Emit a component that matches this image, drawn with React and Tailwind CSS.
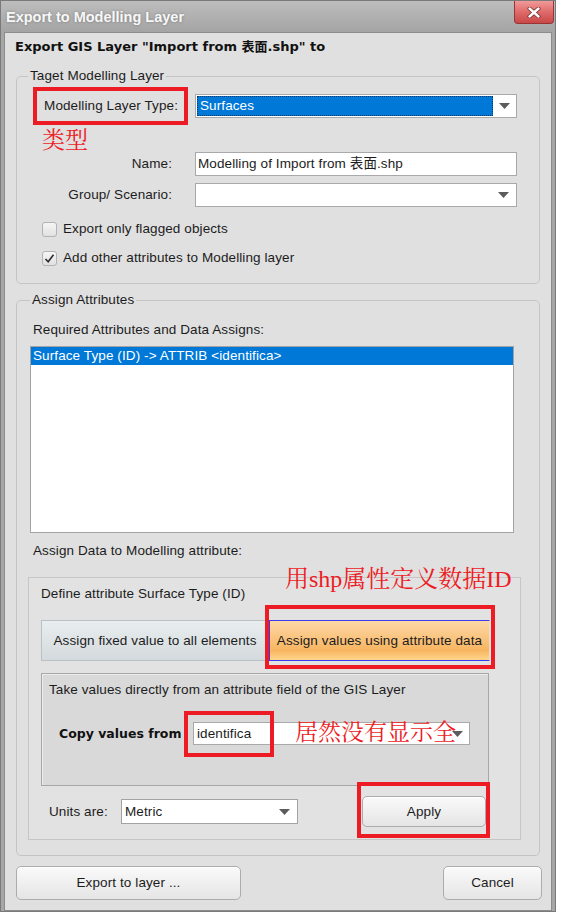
import React from 'react';

function Arrow() {
  return (
    <svg width="11" height="6" viewBox="0 0 11 6" className="shrink-0">
      <path d="M0 0H11L5.5 6Z" fill="#5c5c5c" />
    </svg>
  );
}

function RedBox({ className }) {
  return <span className={`pointer-events-none absolute border-[4px] border-[#ed1c24] ${className}`} />;
}

function RedNote({ className, children }) {
  return (
    <span
      className={`pointer-events-none absolute whitespace-nowrap tracking-normal text-[#ed1c24] font-['Liberation_Serif','Noto_Serif_CJK_SC','Noto_Sans_CJK_SC',serif] ${className}`}
    >
      {children}
    </span>
  );
}

function Check({ checked, label }) {
  return (
    <div className="flex items-center h-[16px] ml-[25px] gap-[6px]">
      <span className="w-[15px] h-[15px] rounded-[3px] border border-[#b3b3b3] bg-gradient-to-b from-[#f6f6f6] to-[#e1e1e1] flex items-center justify-center">
        {checked && (
          <svg width="11" height="11" viewBox="0 0 11 11">
            <path d="M1.5 6L4.2 8.8L9.5 1.8" fill="none" stroke="#2a2a2a" strokeWidth="1.6" />
          </svg>
        )}
      </span>
      <span>{label}</span>
    </div>
  );
}

function Button({ className, children }) {
  return (
    <button className={`rounded-[5px] border border-[#acacac] bg-gradient-to-b from-[#fafafa] to-[#e5e5e5] shadow-[inset_0_1px_0_#ffffff] text-[#1c1c1c] ${className}`}>
      {children}
    </button>
  );
}

export default function App() {
  return (
    <div className="w-[563px] h-[920px] bg-white text-[13.5px] tracking-[0.1px] leading-[14px] text-[#1c1c1c] font-['Liberation_Sans','Noto_Sans_CJK_SC',sans-serif]">
      <div className="w-[556px] h-[912px] flex flex-col bg-[#a6a6a6] border border-[#7a7a7a]">
        {/* title bar */}
        <div className="h-[31px] shrink-0 flex items-start justify-between bg-gradient-to-b from-[#bdbdbd] to-[#a4a4a4]">
          <span className="pl-[5px] pt-[8px] text-[14.5px] tracking-normal leading-[16px] font-bold text-[#f7f7f7] [text-shadow:0_0_3px_rgba(0,0,0,0.3)]">
            Export to Modelling Layer
          </span>
          <button className="mr-[1px] w-[40px] h-[23px] rounded-b-[4px] border border-t-0 border-[#9a3434] bg-gradient-to-b from-[#ef9a9a] via-[#df6a6a] to-[#c84848] flex items-center justify-center">
            <svg width="14" height="11" viewBox="0 0 14 11">
              <path d="M2.5 1.5L11.5 9.5M11.5 1.5L2.5 9.5" stroke="#7a2a2a" strokeWidth="4" strokeLinecap="round" />
              <path d="M2.5 1.5L11.5 9.5M11.5 1.5L2.5 9.5" stroke="#ffffff" strokeWidth="2.4" strokeLinecap="round" />
            </svg>
          </button>
        </div>

        {/* client */}
        <div className="flex-1 mx-[3px] mb-[1px] flex flex-col bg-[#e0e0e0] border border-[#8c8c8c] px-[11px] pb-[10px]">
          <h1 className="pt-[7px] -ml-[1px] font-bold text-[13px] tracking-normal text-[#111] font-['DejaVu_Sans','Noto_Sans_CJK_SC',sans-serif]">
            Export GIS Layer "Import from 表面.shp" to
          </h1>

          {/* target layer */}
          <fieldset className="mt-[15px] border border-[#c4c4c4] rounded-[5px] pb-[17px]">
            <legend className="ml-[11px] px-[2px]">Taget Modelling Layer</legend>

            <div className="mt-[11px] flex items-center h-[24px]">
              <div className="relative w-[161px] h-full flex items-center justify-end">
                <span>Modelling Layer Type:</span>
                <RedBox className="left-[16px] -right-[10px] -top-[7px] -bottom-[7px]" />
                <RedNote className="left-[25px] top-[35px] text-[23px] leading-[24px]">类型</RedNote>
              </div>
              <div className="ml-[17px] w-[322px] h-full flex items-center bg-white border border-[#a9a9a9] p-[1px] pr-[6px]">
                <div className="flex-1 h-full flex items-center bg-[#0078d7] border border-dotted border-[#0b3a66] text-white pl-[2px]">
                  Surfaces
                </div>
                <span className="ml-[6px]"><Arrow /></span>
              </div>
            </div>

            <div className="mt-[34px] flex items-center h-[24px]">
              <div className="w-[161px] text-right pr-[6px]">Name:</div>
              <div className="ml-[17px] w-[322px] h-full flex items-center bg-white border border-[#a9a9a9] pl-[2px]">
                Modelling of Import from 表面.shp
              </div>
            </div>

            <div className="mt-[7px] flex items-center h-[24px]">
              <div className="w-[161px] text-right pr-[6px]">Group/ Scenario:</div>
              <div className="ml-[17px] w-[322px] h-full flex items-center justify-end bg-white border border-[#a9a9a9] pr-[7px]">
                <Arrow />
              </div>
            </div>

            <div className="mt-[14px]">
              <Check label="Export only flagged objects" />
            </div>
            <div className="mt-[13px]">
              <Check checked label="Add other attributes to Modelling layer" />
            </div>
          </fieldset>

          {/* assign attributes */}
          <fieldset className="mt-[9px] border border-[#c4c4c4] rounded-[5px] pl-[11px] pr-[18px] pb-[15px]">
            <legend className="ml-[2px] px-[2px]">Assign Attributes</legend>

            <div className="mt-[16px] ml-[5px]">Required Attributes and Data Assigns:</div>
            <div className="mt-[9px] ml-[2px] mr-[7px] h-[187px] bg-white border border-[#a3a3a3]">
              <div className="h-[18px] flex items-center bg-[#0078d7] text-white pl-[2px]">
                Surface Type (ID) -&gt; ATTRIB &lt;identifica&gt;
              </div>
            </div>

            <div className="mt-[11px] ml-[5px]">Assign Data to Modelling attribute:</div>

            <div className="relative mt-[19px] border border-[#c6c6c6] bg-[#e2e2e2] pl-[12px] pt-[9px] pb-[12px]">
              <RedNote className="left-[256px] -top-[11px] text-[24px] leading-[24px]">用shp属性定义数据ID</RedNote>

              <div>Define attribute Surface Type (ID)</div>

              <div className="mt-[19px] flex h-[41px] w-[449px]">
                <div className="w-[228px] h-full flex items-center justify-center border border-[#bac1c4] bg-gradient-to-b from-[#e9edef] to-[#d4dadd] whitespace-nowrap">
                  Assign fixed value to all elements
                </div>
                <div className="relative w-[221px] h-full flex items-center justify-center border border-[#3a3af2] border-r-[#f0e0c0] bg-[linear-gradient(to_bottom,#fdd8a6,#f9bf75_55%,#f8b560_75%,#fdd58c)] whitespace-nowrap">
                  Assign values using attribute data
                  <RedBox className="-left-[5px] -top-[16px] w-[230px] h-[64px]" />
                </div>
              </div>

              <div className="mt-[12px] w-[448px] h-[113px] border border-[#a8a8a8] bg-[#d9d9d9] shadow-[inset_1px_1px_0_#ececec] pl-[7px] pt-[9px]">
                <div>Take values directly from an attribute field of the GIS Layer</div>
                <div className="mt-[25px] flex items-center h-[23px]">
                  <div className="ml-[10px] w-[134px] font-bold text-[12.5px] tracking-normal text-[#111] font-['DejaVu_Sans',sans-serif] whitespace-nowrap">
                    Copy values from
                  </div>
                  <div className="relative w-[277px] h-full flex items-center justify-between bg-white border border-[#a9a9a9] pl-[3px] pr-[6px]">
                    <span>identifica</span>
                    <Arrow />
                    <RedBox className="-left-[10px] -top-[12px] w-[90px] h-[46px]" />
                    <RedNote className="left-[101px] -top-[2px] text-[23px] leading-[24px]">居然没有显示全</RedNote>
                  </div>
                </div>
              </div>

              <div className="mt-[10px] flex items-center h-[31px]">
                <div className="ml-[8px] w-[72px]">Units are:</div>
                <div className="w-[177px] h-[25px] flex items-center justify-between bg-white border border-[#a3a3a3] pl-[3px] pr-[7px]">
                  <span>Metric</span>
                  <Arrow />
                </div>
                <div className="relative ml-[64px]">
                  <Button className="w-[124px] h-[31px]">Apply</Button>
                  <RedBox className="-left-[5px] -top-[14px] w-[133px] h-[56px]" />
                </div>
              </div>
            </div>
          </fieldset>

          <div className="mt-[10px] flex items-center justify-between -mr-[2px]">
            <Button className="w-[225px] h-[34px]">Export to layer ...</Button>
            <Button className="w-[99px] h-[34px]">Cancel</Button>
          </div>
        </div>
      </div>
    </div>
  );
}
